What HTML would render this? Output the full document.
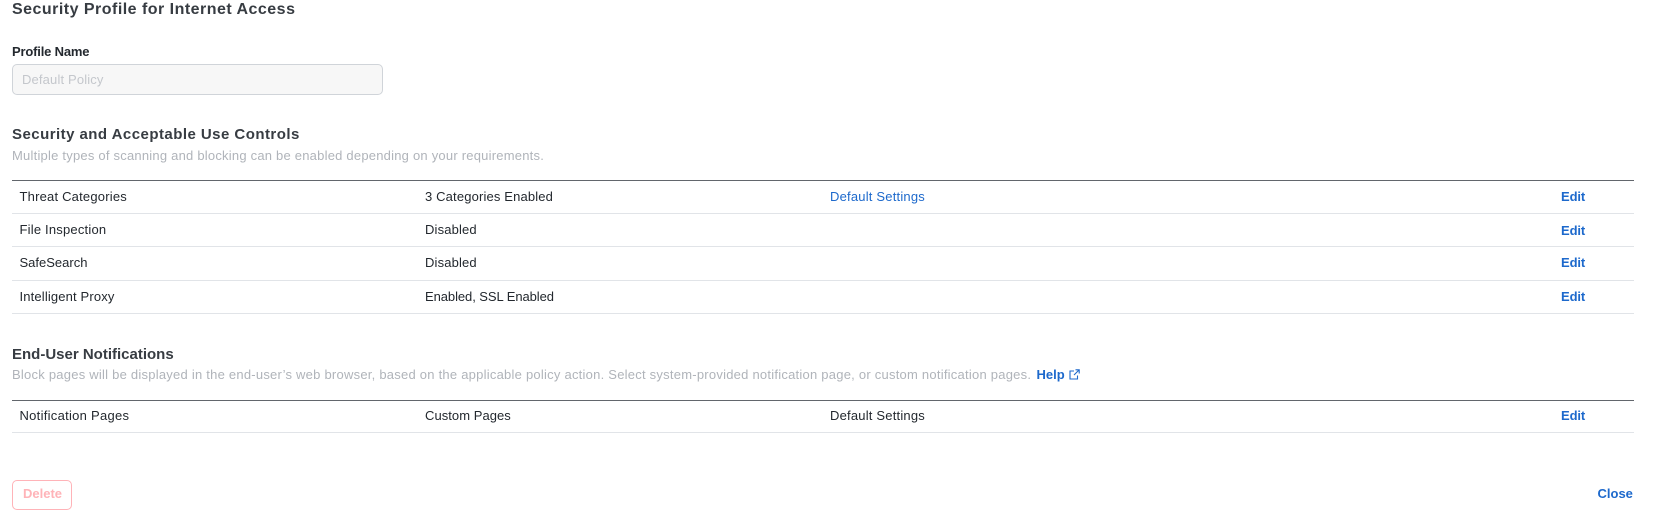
<!DOCTYPE html>
<html lang="en">
<head>
<meta charset="utf-8">
<title>Security Profile for Internet Access</title>
<style>
html,body{margin:0;padding:0;background:#fff;}
body{width:1654px;height:518px;position:relative;overflow:hidden;font-family:"Liberation Sans",sans-serif;}
.t{position:absolute;white-space:nowrap;line-height:20px;font-size:13px;color:#23282e;}
.h{font-weight:bold;font-size:15px;color:#373c42;}
.sub{color:#b0b4ba;font-size:13px;}
.c1{left:19.5px;letter-spacing:.2px;}
.c2{left:425px;letter-spacing:.15px;}
.c3{left:830px;letter-spacing:.2px;}
.blue{color:#1d69cc;}
.edit{left:1561px;font-weight:bold;color:#1d69cc;letter-spacing:-.1px;}
.line{position:absolute;left:12px;width:1622px;height:1px;background:#e1e4e8;}
.line.top{background:#62666c;}
.input{position:absolute;left:12px;top:64px;width:368.5px;height:29px;background:#f7f7f7;border:1px solid #d0d4d9;border-radius:5px;}
.del{position:absolute;left:12px;top:480px;width:58px;height:28px;border:1px solid #ffb3b8;border-radius:5px;}
</style>
</head>
<body>
<div class="t h" style="left:12px;top:0px;font-size:16px;letter-spacing:.48px;">Security Profile for Internet Access</div>
<div class="t" style="left:12px;top:41.5px;font-weight:bold;color:#23282e;letter-spacing:-.18px;">Profile Name</div>
<div class="input"></div>
<div class="t" style="left:22px;top:69.5px;color:#c4c7cc;letter-spacing:.15px;">Default Policy</div>

<div class="t h" style="left:12px;top:125px;letter-spacing:.46px;">Security and Acceptable Use Controls</div>
<div class="t sub" style="left:12px;top:145.5px;letter-spacing:.22px;">Multiple types of scanning and blocking can be enabled depending on your requirements.</div>

<div class="line top" style="top:180px;"></div>
<div class="t c1" style="top:186.5px;">Threat Categories</div>
<div class="t c2" style="top:186.5px;">3 Categories Enabled</div>
<div class="t c3 blue" style="top:186.5px;">Default Settings</div>
<div class="t edit" style="top:186.5px;">Edit</div>
<div class="line" style="top:213px;"></div>

<div class="t c1" style="top:219.5px;">File Inspection</div>
<div class="t c2" style="top:219.5px;">Disabled</div>
<div class="t edit" style="top:220.5px;">Edit</div>
<div class="line" style="top:246px;"></div>

<div class="t c1" style="top:253px;letter-spacing:0;">SafeSearch</div>
<div class="t c2" style="top:253px;">Disabled</div>
<div class="t edit" style="top:253px;">Edit</div>
<div class="line" style="top:280px;"></div>

<div class="t c1" style="top:286.5px;letter-spacing:.15px;">Intelligent Proxy</div>
<div class="t c2" style="top:286.5px;letter-spacing:-.07px;">Enabled, SSL Enabled</div>
<div class="t edit" style="top:286.5px;">Edit</div>
<div class="line" style="top:313px;"></div>

<div class="t h" style="left:12px;top:345px;letter-spacing:0;">End-User Notifications</div>
<div class="t sub" style="left:12px;top:365px;letter-spacing:.237px;">Block pages will be displayed in the end-user’s web browser, based on the applicable policy action. Select system-provided notification page, or custom notification pages.</div>
<div class="t blue" style="left:1036.5px;top:365px;font-weight:bold;">Help</div>
<svg style="position:absolute;left:1069px;top:369px;" width="11" height="11" viewBox="0 0 11 11" fill="none" stroke="#1d69cc" stroke-width="1.1">
<path d="M5 2H1v8h7.500V6.500"/>
<path d="M6.500 .8H10.200V4.500M10 1L5 6"/>
</svg>

<div class="line top" style="top:399.500px;"></div>
<div class="t c1" style="top:405.500px;letter-spacing:.28px;">Notification Pages</div>
<div class="t c2" style="top:405.500px;letter-spacing:.05px;">Custom Pages</div>
<div class="t c3" style="top:405.500px;">Default Settings</div>
<div class="t edit" style="top:405.500px;">Edit</div>
<div class="line" style="top:432px;"></div>

<div class="del"></div>
<div class="t" style="left:23px;top:483.500px;font-weight:bold;color:#ffb3b8;">Delete</div>
<div class="t blue" style="left:1597.500px;top:483.500px;font-weight:bold;">Close</div>
</body>
</html>
